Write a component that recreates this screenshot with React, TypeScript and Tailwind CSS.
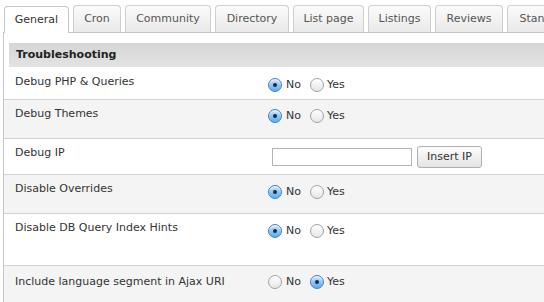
import React from 'react'

const tabs = [
  { label: 'General', w: 'w-[65px]', active: true },
  { label: 'Cron', w: 'w-[48px]' },
  { label: 'Community', w: 'w-[86px]' },
  { label: 'Directory', w: 'w-[74px]' },
  { label: 'List page', w: 'w-[71px]' },
  { label: 'Listings', w: 'w-[63px]' },
  { label: 'Reviews', w: 'w-[68px]' },
  { label: 'Standard', w: 'w-[75px]' },
]

function Radio({ checked }: { checked?: boolean }) {
  if (checked) {
    return (
      <span className="flex h-[14px] w-[14px] shrink-0 items-center justify-center rounded-full border border-[#3f7fc4] bg-gradient-to-b from-[#d5ebfd] via-[#8cc6f5] to-[#5daef0] shadow-[inset_0_1px_1px_rgba(255,255,255,0.8)]">
        <span className="block h-[4px] w-[4px] rounded-full bg-[#1b2a3a]" />
      </span>
    )
  }
  return (
    <span className="block h-[14px] w-[14px] shrink-0 rounded-full border border-[#a2a2a2] bg-gradient-to-b from-[#ffffff] to-[#e6e6e6]" />
  )
}

function YesNo({ yes }: { yes?: boolean }) {
  return (
    <div className="flex items-center text-[11px] leading-[14px] text-[#333]">
      <Radio checked={!yes} />
      <span className="ml-[4px]">No</span>
      <span className="ml-[9px] block">
        <Radio checked={yes} />
      </span>
      <span className="ml-[3px]">Yes</span>
    </div>
  )
}

function Row({
  label,
  h,
  gray,
  last,
  lpt,
  cpt,
  children,
}: {
  label: string
  h: string
  gray?: boolean
  last?: boolean
  lpt: string
  cpt: string
  children: React.ReactNode
}) {
  return (
    <div className={`flex ${h} ${gray ? 'bg-[#f4f4f4]' : 'bg-white'} ${last ? '' : 'border-b border-[#d2d2d2]'}`}>
      <div className={`w-[264px] shrink-0 pl-[11px] ${lpt} text-[11px] leading-[13px] text-[#333]`}>{label}</div>
      <div className={cpt}>{children}</div>
    </div>
  )
}

export default function App() {
  return (
    <div className="h-[302px] w-[544px] overflow-hidden bg-white font-['DejaVu_Sans',sans-serif]">
      <div className="ml-[3px]">
        {/* tab strip */}
        <div className="flex items-end gap-[4px] whitespace-nowrap border-b border-[#c6c6c6] pl-[1px] pt-[5px]">
          {tabs.map((t) =>
            t.active ? (
              <div
                key={t.label}
                className={`${t.w} -mb-px flex h-[27px] shrink-0 items-center justify-center rounded-t-[4px] border border-b-0 border-[#c6c6c6] bg-white text-[11px] text-[#333]`}
              >
                {t.label}
              </div>
            ) : (
              <div
                key={t.label}
                className={`${t.w} flex h-[27px] shrink-0 items-center justify-center rounded-t-[4px] border border-b-0 border-[#cfcfcf] bg-gradient-to-b from-[#fbfbfb] to-[#e9e9e9] text-[11px] text-[#555]`}
              >
                {t.label}
              </div>
            ),
          )}
        </div>

        {/* panel */}
        <div className="h-[300px] border-l border-[#c6c6c6] pt-[10px]">
          <div className="ml-[5px] flex h-[24px] items-center bg-gradient-to-b from-[#d6d6d6] to-[#e3e3e3] pl-[7px] text-[11px] font-bold text-[#222]">
            Troubleshooting
          </div>

          <Row label="Debug PHP & Queries" h="h-[33px]" lpt="pt-[8px]" cpt="pt-[11px]">
            <YesNo />
          </Row>
          <Row label="Debug Themes" h="h-[39px]" gray lpt="pt-[7px]" cpt="pt-[9px]">
            <YesNo />
          </Row>
          <Row label="Debug IP" h="h-[36px]" lpt="pt-[7px]" cpt="pt-[7px]">
            <div className="flex items-center">
              <input
                type="text"
                className="ml-[4px] h-[18px] w-[140px] border border-[#b4b4b4] bg-white text-[11px] outline-none"
              />
              <button
                type="button"
                className="ml-[5px] h-[22px] w-[65px] rounded-[3px] border border-[#b0b0b0] bg-gradient-to-b from-[#fdfdfd] to-[#e4e4e4] text-[11px] text-[#333]"
              >
                Insert IP
              </button>
            </div>
          </Row>
          <Row label="Disable Overrides" h="h-[39px]" gray lpt="pt-[7px]" cpt="pt-[10px]">
            <YesNo />
          </Row>
          <Row label="Disable DB Query Index Hints" h="h-[52px]" lpt="pt-[7px]" cpt="pt-[10px]">
            <YesNo />
          </Row>
          <Row label="Include language segment in Ajax URI" h="h-[40px]" gray last lpt="pt-[9px]" cpt="pt-[9px]">
            <YesNo yes />
          </Row>
        </div>
      </div>
    </div>
  )
}
